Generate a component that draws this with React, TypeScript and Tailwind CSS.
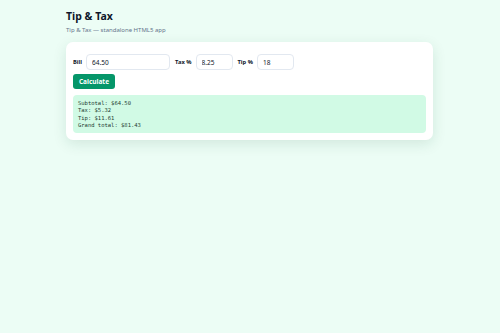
import React, { useState } from 'react';

const App: React.FC = () => {
  const [bill, setBill] = useState('64.50');
  const [tax, setTax] = useState('8.25');
  const [tip, setTip] = useState('18');

  const b = parseFloat(bill) || 0;
  const taxAmt = (b * (parseFloat(tax) || 0)) / 100;
  const tipAmt = (b * (parseFloat(tip) || 0)) / 100;

  return (
    <div className="min-h-[333px] w-full bg-[#ecfdf5] font-['Noto_Sans',sans-serif] text-[#0f172a]">
      <div className="ml-[66px] w-[367px] pt-[9px]">
        <h1 className="text-[10.5px] font-bold leading-[14px]">Tip &amp; Tax</h1>
        <p className="mt-[3px] text-[6px] leading-[9px] text-[#64748b]">Tip &amp; Tax — standalone HTML5 app</p>

        <div className="mt-[7px] rounded-[7px] bg-white px-[7px] pb-[7px] pt-[12px] shadow-[0_4px_14px_rgba(16,80,60,0.12)]">
          <div className="flex items-center gap-[4px]">
            <label className="text-[5.8px] font-bold">Bill</label>
            <input
              value={bill}
              onChange={e => setBill(e.target.value)}
              className="h-[16px] w-[84px] rounded-[4px] border border-[#e2e8f0] px-[5px] text-[6.5px] outline-none"
            />
            <label className="ml-[1px] text-[5.8px] font-bold">Tax %</label>
            <input
              value={tax}
              onChange={e => setTax(e.target.value)}
              className="h-[16px] w-[37px] rounded-[4px] border border-[#e2e8f0] px-[5px] text-[6.5px] outline-none"
            />
            <label className="ml-[1px] text-[5.8px] font-bold">Tip %</label>
            <input
              value={tip}
              onChange={e => setTip(e.target.value)}
              className="h-[16px] w-[37px] rounded-[4px] border border-[#e2e8f0] px-[5px] text-[6.5px] outline-none"
            />
          </div>

          <button className="mt-[4px] block h-[15px] w-[42px] rounded-[3px] bg-[#059669] text-[6.5px] font-bold text-white">
            Calculate
          </button>

          <pre className="mt-[6px] h-[38px] rounded-[4px] bg-[#d1fae5] px-[5px] py-[5px] font-['DejaVu_Sans_Mono',monospace] text-[5.5px] leading-[7.3px] text-[#1f3d34]">
{`Subtotal: $${b.toFixed(2)}
Tax: $${taxAmt.toFixed(2)}
Tip: $${tipAmt.toFixed(2)}
Grand total: $${(b + taxAmt + tipAmt).toFixed(2)}`}
          </pre>
        </div>
      </div>
    </div>
  );
};

export default App;
